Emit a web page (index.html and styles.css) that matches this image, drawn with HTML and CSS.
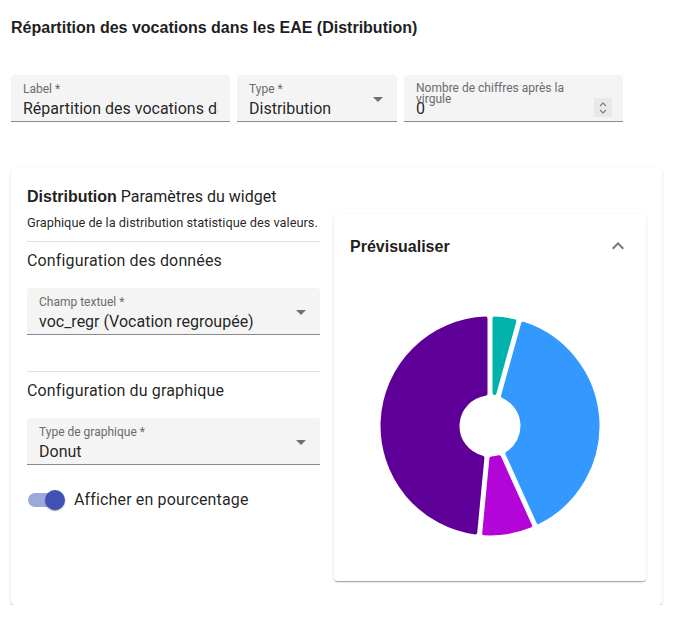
FILE: index.html
```html
<!DOCTYPE html>
<html lang="fr">
<head>
<meta charset="utf-8">
<title>Distribution</title>
<link rel="stylesheet" href="styles.css">
</head>
<body>
<div class="page">
  <h1 class="page-title">Répartition des vocations dans les EAE (Distribution)</h1>

  <div class="top-fields">
    <div class="field field-label">
      <div class="field-lbl">Label *</div>
      <div class="field-val">Répartition des vocations dans les EAE</div>
    </div>
    <div class="field field-type">
      <div class="field-lbl">Type *</div>
      <div class="field-val">Distribution</div>
      <span class="arrow"></span>
    </div>
    <div class="field field-digits">
      <div class="field-lbl two-line">Nombre de chiffres après la virgule</div>
      <div class="field-val">0</div>
      <div class="spinner">
        <svg width="10" height="14" viewBox="0 0 10 14"><path d="M2 5 L5 2 L8 5 M2 9 L5 12 L8 9" fill="none" stroke="#7a7a7a" stroke-width="1.1"/></svg>
      </div>
    </div>
  </div>

  <div class="card">
    <div class="card-title"><b>Distribution</b> Paramètres du widget</div>
    <div class="card-body">
      <div class="settings">
        <div class="desc">Graphique de la distribution statistique des valeurs.</div>
        <hr class="divider">
        <div class="section-title">Configuration des données</div>
        <div class="field field-wide">
          <div class="field-lbl">Champ textuel *</div>
          <div class="field-val">voc_regr (Vocation regroupée)</div>
          <span class="arrow"></span>
        </div>
        <hr class="divider divider-2">
        <div class="section-title">Configuration du graphique</div>
        <div class="field field-wide">
          <div class="field-lbl">Type de graphique *</div>
          <div class="field-val">Donut</div>
          <span class="arrow"></span>
        </div>
        <div class="switch-row">
          <div class="switch">
            <span class="track"></span>
            <span class="thumb"></span>
          </div>
          <span class="switch-label">Afficher en pourcentage</span>
        </div>
      </div>

      <div class="preview">
        <div class="preview-head">
          <span class="preview-title">Prévisualiser</span>
          <svg class="chev" width="24" height="24" viewBox="0 0 24 24"><path d="M7.41 15.41 12 10.83l4.59 4.58L18 14l-6-6-6 6z" fill="#757575"/></svg>
        </div>
        <div class="preview-chart">
          <svg width="240" height="240" viewBox="0 0 240 240">
            <g stroke-width="4" stroke-linejoin="round">
              <path d="M124.50,12.60 A107.5,107.5 0 0 1 144.37,15.30 L124.50,86.95 Z" fill="#00b2ac" stroke="#00b2ac"/>
              <path d="M153.04,17.70 A107.5,107.5 0 0 1 168.30,216.04 L137.35,147.48 A32.5,32.5 0 0 0 132.94,90.19 Z" fill="#3399ff" stroke="#3399ff"/>
              <path d="M160.10,219.74 A107.5,107.5 0 0 1 114.19,227.34 L121.39,152.47 A32.5,32.5 0 0 0 129.14,151.19 Z" fill="#b405d8" stroke="#b405d8"/>
              <path d="M105.23,226.48 A107.5,107.5 0 0 1 115.50,12.60 L115.50,87.81 A32.5,32.5 0 0 0 112.44,151.61 Z" fill="#5e0098" stroke="#5e0098"/>
            </g>
          </svg>
        </div>
      </div>
    </div>
  </div>
</div>
</body>
</html>
```
FILE: styles.css
```css
* { box-sizing: border-box; }
body {
  margin: 0;
  background: #ffffff;
  font-family: Roboto, "Liberation Sans", Arial, sans-serif;
  color: rgba(0,0,0,0.87);
}
.page {
  padding: 16px 11px 0 11px;
}
.page-title {
  margin: 0;
  font-family: "Liberation Sans", Arial, sans-serif;
  font-size: 16px;
  line-height: 24px;
  font-weight: 700;
  color: #1f1f1f;
}
.top-fields {
  display: flex;
  gap: 7px;
  margin-top: 35px;
}
.field {
  position: relative;
  height: 47px;
  background: #f4f4f4;
  border-radius: 4px 4px 0 0;
  border-bottom: 1px solid #8a8a8a;
  padding: 0 12px;
}
.field-label { width: 219px; }
.field-type { width: 160px; }
.field-digits { width: 219px; }
.field-wide { width: 293px; }
.field-lbl {
  padding-top: 7px;
  font-size: 12px;
  line-height: 14px;
  color: #6b6b6b;
  white-space: nowrap;
}
.field-lbl.two-line {
  white-space: normal;
  line-height: 11px;
  padding-top: 8px;
  width: 160px;
  position: absolute;
  left: 12px;
  top: 0;
}
.field-val {
  margin-top: 2px;
  font-size: 16px;
  line-height: 22px;
  white-space: nowrap;
  overflow: hidden;
  color: rgba(0,0,0,0.87);
}
.field-digits .field-val {
  padding-top: 23px;
  margin-top: 0;
}
.arrow {
  position: absolute;
  right: 14px;
  top: 22px;
  width: 0;
  height: 0;
  border-left: 5px solid transparent;
  border-right: 5px solid transparent;
  border-top: 5px solid #707070;
}
.spinner {
  position: absolute;
  right: 11px;
  top: 23px;
  width: 18px;
  height: 19px;
  background: #e9e9ec;
  display: flex;
  align-items: center;
  justify-content: center;
}
.card {
  margin-top: 46px;
  width: 651px;
  background: #fff;
  border-radius: 4px;
  box-shadow: 0 2px 1px -1px rgba(0,0,0,.2), 0 1px 1px 0 rgba(0,0,0,.14), 0 1px 3px 0 rgba(0,0,0,.12);
  padding: 17px 16px 24px 16px;
}
.card-title {
  font-size: 16px;
  line-height: 24px;
  color: #1f1f1f;
}
.card-title b {
  font-family: "Liberation Sans", Arial, sans-serif;
  font-weight: 700;
}
.card-body {
  display: flex;
  gap: 14px;
  margin-top: 5px;
  align-items: flex-start;
}
.settings {
  width: 293px;
}
.desc {
  font-size: 12.8px;
  line-height: 18px;
  color: rgba(0,0,0,0.87);
  white-space: nowrap;
}
.divider {
  margin: 9px 0 0 0;
  border: none;
  border-top: 1px solid #e0e0e0;
  height: 0;
}
.divider-2 { margin-top: 36px; }
.section-title {
  margin-top: 7px;
  margin-bottom: 15px;
  font-size: 16px;
  line-height: 24px;
  letter-spacing: 0.15px;
}
.switch-row {
  display: flex;
  align-items: center;
  margin-top: 16px;
  margin-left: -11px;
}
.switch {
  position: relative;
  width: 58px;
  height: 38px;
}
.track {
  position: absolute;
  left: 12px;
  top: 12px;
  width: 34px;
  height: 14px;
  border-radius: 7px;
  background: #9fa8da;
}
.thumb {
  position: absolute;
  left: 29px;
  top: 9px;
  width: 20px;
  height: 20px;
  border-radius: 50%;
  background: #3f51b5;
  box-shadow: 0 2px 1px -1px rgba(0,0,0,.2), 0 1px 1px 0 rgba(0,0,0,.14), 0 1px 3px 0 rgba(0,0,0,.12);
}
.switch-label {
  font-size: 16px;
  line-height: 24px;
  letter-spacing: 0.15px;
}
.preview {
  width: 312px;
  background: #fff;
  border-radius: 4px;
  box-shadow: 0 2px 1px -1px rgba(0,0,0,.2), 0 1px 1px 0 rgba(0,0,0,.14), 0 1px 3px 0 rgba(0,0,0,.12);
  padding-bottom: 7px;
}
.preview-head {
  height: 64px;
  padding: 1px 16px 0 16px;
  display: flex;
  align-items: center;
  justify-content: space-between;
}
.preview-title {
  font-family: "Liberation Sans", Arial, sans-serif;
  font-size: 16px;
  font-weight: 700;
  line-height: 24px;
  color: #1f1f1f;
}
.chev { display: block; margin-top: -1px; }
.preview-chart {
  height: 296px;
  display: flex;
  align-items: center;
  justify-content: center;
}
.preview-chart svg { display: block; }
```
